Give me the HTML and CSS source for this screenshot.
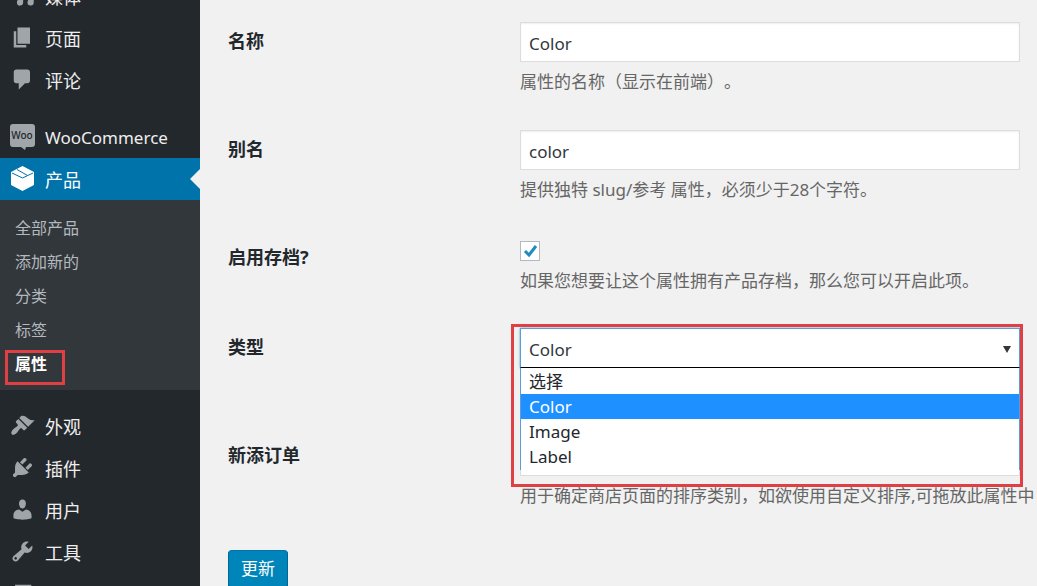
FILE: index.html
```html
<!DOCTYPE html>
<html lang="zh-CN">
<head>
  <meta charset="UTF-8">
  <meta name="viewport" content="width=device-width, initial-scale=1">
  <title>属性</title>
  <link rel="stylesheet" href="styles.css">
</head>
<body>
  <nav class="sidebar">
    <ul class="menu">
      <li>
        <a class="menu-link" href="#">
          <svg class="icon" viewBox="0 0 20 20"><path d="M8 9h11v6.500a2.500 2.500 0 1 1-2-2.400V11h-6.500v4.500a2.500 2.500 0 1 1-2.500-2.400z"/></svg>
          媒体
        </a>
      </li>
      <li>
        <a class="menu-link" href="#">
          <svg class="icon" viewBox="0 0 20 20"><path d="M6 15V2h10v13H6zm-1 1h8v2H3V5h2v11z"/></svg>
          页面
        </a>
      </li>
      <li>
        <a class="menu-link" href="#">
          <svg class="icon" viewBox="0 0 20 20"><path d="M5 2h9c1.100 0 2 .9 2 2v7c0 1.100-.9 2-2 2h-2l-5 5v-5H5c-1.100 0-2-.9-2-2V4c0-1.100.9-2 2-2z"/></svg>
          评论
        </a>
      </li>
      <li class="separator"></li>
      <li>
        <a class="menu-link latin" href="#">
          <svg class="icon" viewBox="0 0 25 25">
            <path d="M3 0h19q3 0 3 3v17q0 3-3 3h-6l-1 3-4-3H3q-3 0-3-3V3q0-3 3-3z"/>
            <text class="woo" x="12" y="15" text-anchor="middle">Woo</text>
          </svg>
          WooCommerce
        </a>
      </li>
      <li>
        <a class="menu-link current" href="#">
          <svg class="icon" viewBox="0 0 25 25">
            <path d="M12.500 0L24 6v13l-11.500 6L1 19V6z"/>
            <path class="box-line" d="M2 7l10.500 5L23 7M7 3.500l10.500 6"/>
          </svg>
          产品
        </a>
        <ul class="submenu">
          <li><a href="#">全部产品</a></li>
          <li><a href="#">添加新的</a></li>
          <li><a href="#">分类</a></li>
          <li><a href="#">标签</a></li>
          <li class="active"><a href="#">属性</a></li>
        </ul>
      </li>
      <li class="separator"></li>
      <li>
        <a class="menu-link" href="#">
          <svg class="icon" viewBox="0 0 20 20"><path d="M14.480 11.060L7.410 3.990l1.500-1.500c.5-.56 2.300-.47 3.510.32 1.210.8 1.430 1.280 2.910 2.100 1.180.64 2.450 1.260 4.450.85zm-.71.71L6.700 4.700 4.930 6.470c-.39.39-.39 1.020 0 1.410l1.060 1.060c.39.39.39 1.030 0 1.420-.6.6-1.430 1.110-2.210 1.690-.35.26-.7.53-1.010.84C1.430 14.230.4 16.080 1.400 17.070c.99 1 2.840-.03 4.180-1.360.31-.31.58-.66.85-1.020.57-.78 1.080-1.610 1.690-2.210.39-.39 1.020-.39 1.410 0l1.060 1.060c.39.39 1.020.39 1.410 0z"/></svg>
          外观
        </a>
      </li>
      <li>
        <a class="menu-link" href="#">
          <svg class="icon" viewBox="0 0 20 20"><path d="M13.110 4.360L9.870 7.600 8 5.730l3.240-3.240c.35-.34 1.050-.2 1.560.32.52.51.66 1.210.31 1.550zm-8 1.770l.91-1.120 9.010 9.010-1.190.84c-.71.71-2.630 1.160-3.820 1.160H6.140L4.900 17.260c-.59.59-1.540.59-2.120 0-.59-.58-.59-1.530 0-2.120l1.240-1.240v-3.880c0-1.130.4-3.190 1.090-3.890zm7.260 3.970l3.240-3.240c.34-.35 1.040-.21 1.550.31.52.51.66 1.210.31 1.550l-3.240 3.250z"/></svg>
          插件
        </a>
      </li>
      <li>
        <a class="menu-link" href="#">
          <svg class="icon" viewBox="0 0 20 20"><path d="M10 9.250c-2.270 0-2.730-3.440-2.730-3.440C7 4.020 7.820 2 9.970 2c2.160 0 2.980 2.020 2.710 3.810 0 0-.41 3.440-2.680 3.440zm0 2.570L12.720 10c2.390 0 4.520 2.330 4.520 4.530v2.490s-3.650 1.130-7.240 1.130c-3.650 0-7.240-1.130-7.240-1.130v-2.490c0-2.250 1.940-4.480 4.470-4.480z"/></svg>
          用户
        </a>
      </li>
      <li>
        <a class="menu-link" href="#">
          <svg class="icon" viewBox="0 0 20 20"><path d="M16.680 9.770c-1.340 1.340-3.300 1.670-4.950.99l-5.410 6.520c-.99.99-2.590.99-3.580 0s-.99-2.590 0-3.570l6.520-5.420c-.68-1.650-.35-3.610.99-4.950 1.280-1.280 3.120-1.620 4.720-1.060l-2.890 2.890 2.820 2.820 2.860-2.870c.53 1.580.18 3.390-1.080 4.650zM3.810 16.210c.4.39 1.040.39 1.430 0 .4-.4.4-1.040 0-1.430-.39-.4-1.030-.4-1.430 0-.39.39-.39 1.030 0 1.430z"/></svg>
          工具
        </a>
      </li>
      <li>
        <a class="menu-link" href="#" aria-label="设置">
          <svg class="icon" viewBox="0 0 20 20"><path d="M4 3h13v14H4z"/></svg>
        </a>
      </li>
    </ul>
  </nav>

  <main class="content">
    <form>
      <div class="row">
        <label class="row-label" for="name">名称</label>
        <div class="field">
          <input class="control" type="text" id="name" value="Color">
          <p class="description">属性的名称（显示在前端）。</p>
        </div>
      </div>
      <div class="row">
        <label class="row-label" for="slug">别名</label>
        <div class="field">
          <input class="control" type="text" id="slug" value="color">
          <p class="description">提供独特 slug/参考 属性，必须少于28个字符。</p>
        </div>
      </div>
      <div class="row row-archive">
        <label class="row-label" for="archive">启用存档?</label>
        <div class="field">
          <span class="check">
            <input type="checkbox" id="archive" checked>
            <svg viewBox="0 0 20 20"><path d="M5 10l4 4 7-9"/></svg>
          </span>
          <p class="description">如果您想要让这个属性拥有产品存档，那么您可以开启此项。</p>
        </div>
      </div>
      <div class="row row-type">
        <label class="row-label" for="type">类型</label>
        <div class="field">
          <div class="dropdown">
            <select class="control" id="type">
              <option>选择</option>
              <option selected>Color</option>
              <option>Image</option>
              <option>Label</option>
            </select>
            <span class="arrow"></span>
            <ul class="options" role="listbox" aria-label="类型">
              <li role="option">选择</li>
              <li role="option" class="selected" aria-selected="true">Color</li>
              <li role="option">Image</li>
              <li role="option">Label</li>
            </ul>
            <div class="highlight"></div>
          </div>
        </div>
      </div>
      <div class="row row-order">
        <label class="row-label" for="order">新添订单</label>
        <div class="field">
          <select class="control" id="order"></select>
          <p class="description">用于确定商店页面的排序类别，如欲使用自定义排序,可拖放此属性中</p>
        </div>
      </div>
      <button class="submit" type="submit">更新</button>
    </form>
  </main>
</body>
</html>
```
FILE: styles.css
```css
*,
*::after {
  box-sizing: border-box;
}
body {
  margin: 0;
  display: flex;
  height: 100vh;
  overflow: hidden;
  background: #f1f1f1;
  color: #23282d;
  font-family: "Noto Sans", "Noto Sans CJK SC", sans-serif;
  font-size: 17px;
  text-spacing-trim: space-all;
}
ul {
  list-style: none;
  margin: 0;
  padding: 0;
}

/* sidebar */
.sidebar {
  flex: 0 0 200px;
  background: #23282d;
  overflow: hidden;
}
.menu {
  margin-top: -25px;
}
.menu-link {
  display: flex;
  align-items: center;
  gap: 10px;
  height: 42px;
  padding-left: 10px;
  color: #eee;
  font-size: 18px;
  text-decoration: none;
}
.latin {
  font-size: 17px;
}
.icon {
  flex: none;
  width: 25px;
  height: 25px;
  margin-bottom: 2px;
  fill: #a0a5aa;
  overflow: visible;
}
.woo {
  fill: #23282d;
  font-size: 10px;
  font-weight: 500;
}
.separator {
  height: 15px;
}
.current {
  position: relative;
  background: #0073aa;
  color: #fff;
}
.current .icon {
  fill: #fff;
}
.current::after {
  content: "";
  position: absolute;
  right: 0;
  top: 11px;
  border: 10px solid transparent;
  border-left: 0;
  border-right-color: #f1f1f1;
}
.box-line {
  fill: none;
  stroke: #0073aa;
}
.submenu {
  padding: 11px 0 9px;
  background: #32373c;
}
.submenu li {
  position: relative;
  height: 34px;
  padding-left: 15px;
  line-height: 34px;
}
.submenu a {
  color: #b4b9be;
  font-size: 16px;
  text-decoration: none;
}
.submenu .active a {
  color: #fff;
  font-weight: bold;
}
.active::after {
  content: "";
  position: absolute;
  left: 5px;
  top: 3px;
  width: 60px;
  height: 35px;
  border: 3px solid #e04043;
}

/* form */
.content {
  flex: 1;
  min-width: 0;
  padding: 22px 17px 0 28px;
}
.row {
  display: grid;
  grid-template-columns: 292px minmax(0, 500px);
  min-height: 108px;
}
.row-label {
  padding-top: 6px;
  font-size: 18px;
  font-weight: bold;
  line-height: 26px;
}
.control {
  display: block;
  width: 100%;
  height: 40px;
  padding: 5px 8px 3px;
  border: 1px solid #ddd;
  border-radius: 0;
  background: #fff;
  box-shadow: inset 0 1px 2px rgba(0, 0, 0, 0.07);
  color: #32373c;
  font: inherit;
  appearance: none;
}
.description {
  margin: 7px 0 0;
  color: #666;
  line-height: 26px;
  white-space: nowrap;
}
.row-archive {
  min-height: 90px;
}
.check {
  position: relative;
  display: block;
  width: 20px;
  height: 20px;
  margin-top: 3px;
}
.check input {
  display: block;
  width: 20px;
  height: 20px;
  margin: 0;
  border: 1px solid #b4b9be;
  background: #fff;
  appearance: none;
}
.check svg {
  position: absolute;
  inset: 0;
  fill: none;
  stroke: #1e8cbe;
  stroke-width: 3;
  pointer-events: none;
}
.row-type .control {
  border-color: #5b9dd9;
  box-shadow: 0 0 2px rgba(30, 140, 190, 0.8);
}
.dropdown {
  position: relative;
}
.arrow {
  position: absolute;
  right: 9px;
  top: 18px;
  border: 4px solid transparent;
  border-top: 7px solid #32373c;
  border-bottom: 0;
  pointer-events: none;
}
.options {
  position: absolute;
  z-index: 1;
  top: 39px;
  left: 0;
  right: 0;
  padding: 1px 0;
  border: 1px solid #5b9dd9;
  border-top-color: #000;
  border-bottom: 0;
  background: #fff;
}
.options li {
  height: 25px;
  padding-left: 8px;
  line-height: 25px;
}
.options .selected {
  background: #1e90ff;
  color: #fff;
}
.highlight {
  position: absolute;
  z-index: 2;
  top: -4px;
  left: -9px;
  right: -3px;
  height: 163px;
  border: 3px solid #e04043;
  pointer-events: none;
}
.row-order {
  min-height: 114px;
}
.submit {
  height: 38px;
  padding: 0 12px 3px;
  border: 1px solid #006799;
  border-top-color: #0073aa;
  border-radius: 4px;
  background: #0085ba;
  box-shadow: 0 1px 0 #006799;
  color: #fff;
  font-family: inherit;
  font-size: 17px;
}
```
